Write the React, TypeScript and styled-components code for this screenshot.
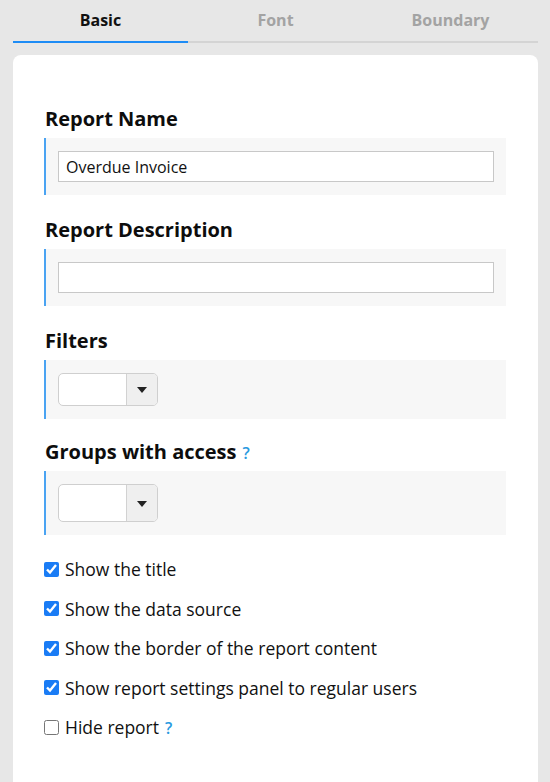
import React, { useState } from "react";
import styled, { createGlobalStyle } from "styled-components";

const GlobalStyle = createGlobalStyle`
  html, body {
    margin: 0;
    padding: 0;
    background: #e7e7e7;
    font-family: "Open Sans", "Liberation Sans", sans-serif;
    color: #111;
  }
  * { box-sizing: border-box; }
`;

const Page = styled.div`
  padding: 0 12px 0 13px;
  height: 782px;
  overflow: hidden;
`;

const TabBar = styled.div`
  display: flex;
  height: 43px;
  border-bottom: 2px solid #d4d4d4;
`;

const Tab = styled.div<{ $active?: boolean }>`
  flex: 1;
  display: flex;
  align-items: center;
  justify-content: center;
  padding-bottom: 1px;
  margin-bottom: -2px;
  font-size: 16px;
  font-weight: 700;
  color: ${(p) => (p.$active ? "#111" : "#a3a3a3")};
  border-bottom: 2px solid ${(p) => (p.$active ? "#1e8cf5" : "transparent")};
  cursor: pointer;
`;

const Card = styled.div`
  margin-top: 12px;
  background: #fff;
  border-radius: 8px;
  padding: 51px 32px 60px 31px;
  min-height: 760px;
`;

const Label = styled.div<{ $tight?: boolean }>`
  font-size: 20px;
  font-weight: 700;
  line-height: 26px;
  height: 26px;
  color: #0d0d0d;
  margin-top: ${(p) => (p.$tight ? "-2px" : "0")};
  margin-bottom: 6px;
  padding-left: 1px;
`;

const Help = styled.span`
  font-size: 16px;
  font-weight: 600;
  line-height: 0;
  color: #2a9ae0;
  margin-left: 6px;
  cursor: help;
`;

const Field = styled.div`
  background: #f7f7f7;
  border-left: 2px solid #4aa3f2;
  padding: 13px 12px;
  margin-bottom: 22px;
`;

const TextInput = styled.input`
  display: block;
  width: 100%;
  height: 31px;
  border: 1px solid #c8c8c8;
  background: #fff;
  padding: 0 7px;
  font-family: inherit;
  font-size: 16px;
  color: #111;
  outline: none;
`;

const Select = styled.div<{ $h: number }>`
  display: flex;
  width: 100px;
  height: ${(p) => p.$h}px;
  border: 1px solid #cfcfcf;
  border-radius: 5px;
  background: #fff;
  overflow: hidden;
`;

const SelectValue = styled.div`
  flex: 1;
`;

const SelectArrow = styled.div`
  width: 31px;
  border-left: 1px solid #d2d2d2;
  background: #efefef;
  display: flex;
  align-items: center;
  justify-content: center;

  &::after {
    content: "";
    border-left: 5px solid transparent;
    border-right: 5px solid transparent;
    border-top: 6px solid #222;
    margin-top: 1px;
  }
`;

const Checks = styled.div`
  display: flex;
  flex-direction: column;
  gap: 15.5px;
  margin-top: 1px;
`;

const CheckRow = styled.label`
  display: flex;
  align-items: center;
  gap: 6px;
  height: 24px;
  font-size: 17.5px;
  color: #111;
  cursor: pointer;
`;

const Box = styled.input`
  width: 15px;
  height: 15px;
  margin: 0;
  accent-color: #1a7cf5;
`;

const options = [
  { label: "Show the title", checked: true },
  { label: "Show the data source", checked: true },
  { label: "Show the border of the report content", checked: true },
  { label: "Show report settings panel to regular users", checked: true },
  { label: "Hide report", checked: false, help: true },
];

const App = () => {
  const [tab, setTab] = useState("Basic");
  const [name, setName] = useState("Overdue Invoice");
  const [desc, setDesc] = useState("");
  const [checks, setChecks] = useState(options.map((o) => o.checked));

  const toggle = (i: number) => {
    const next = [...checks];
    next[i] = !next[i];
    setChecks(next);
  };

  return (
    <Page>
      <GlobalStyle />
      <TabBar>
        {["Basic", "Font", "Boundary"].map((t) => (
          <Tab key={t} $active={tab === t} onClick={() => setTab(t)}>
            {t}
          </Tab>
        ))}
      </TabBar>
      <Card>
        <Label>Report Name</Label>
        <Field>
          <TextInput value={name} onChange={(e) => setName(e.target.value)} />
        </Field>

        <Label>Report Description</Label>
        <Field>
          <TextInput value={desc} onChange={(e) => setDesc(e.target.value)} />
        </Field>

        <Label>Filters</Label>
        <Field>
          <Select $h={33}>
            <SelectValue />
            <SelectArrow />
          </Select>
        </Field>

        <Label $tight>
          Groups with access<Help>?</Help>
        </Label>
        <Field>
          <Select $h={38}>
            <SelectValue />
            <SelectArrow />
          </Select>
        </Field>

        <Checks>
          {options.map((o, i) => (
            <CheckRow key={o.label}>
              <Box type="checkbox" checked={checks[i]} onChange={() => toggle(i)} />
              <span>
                {o.label}
                {o.help && <Help>?</Help>}
              </span>
            </CheckRow>
          ))}
        </Checks>
      </Card>
    </Page>
  );
};

export default App;
